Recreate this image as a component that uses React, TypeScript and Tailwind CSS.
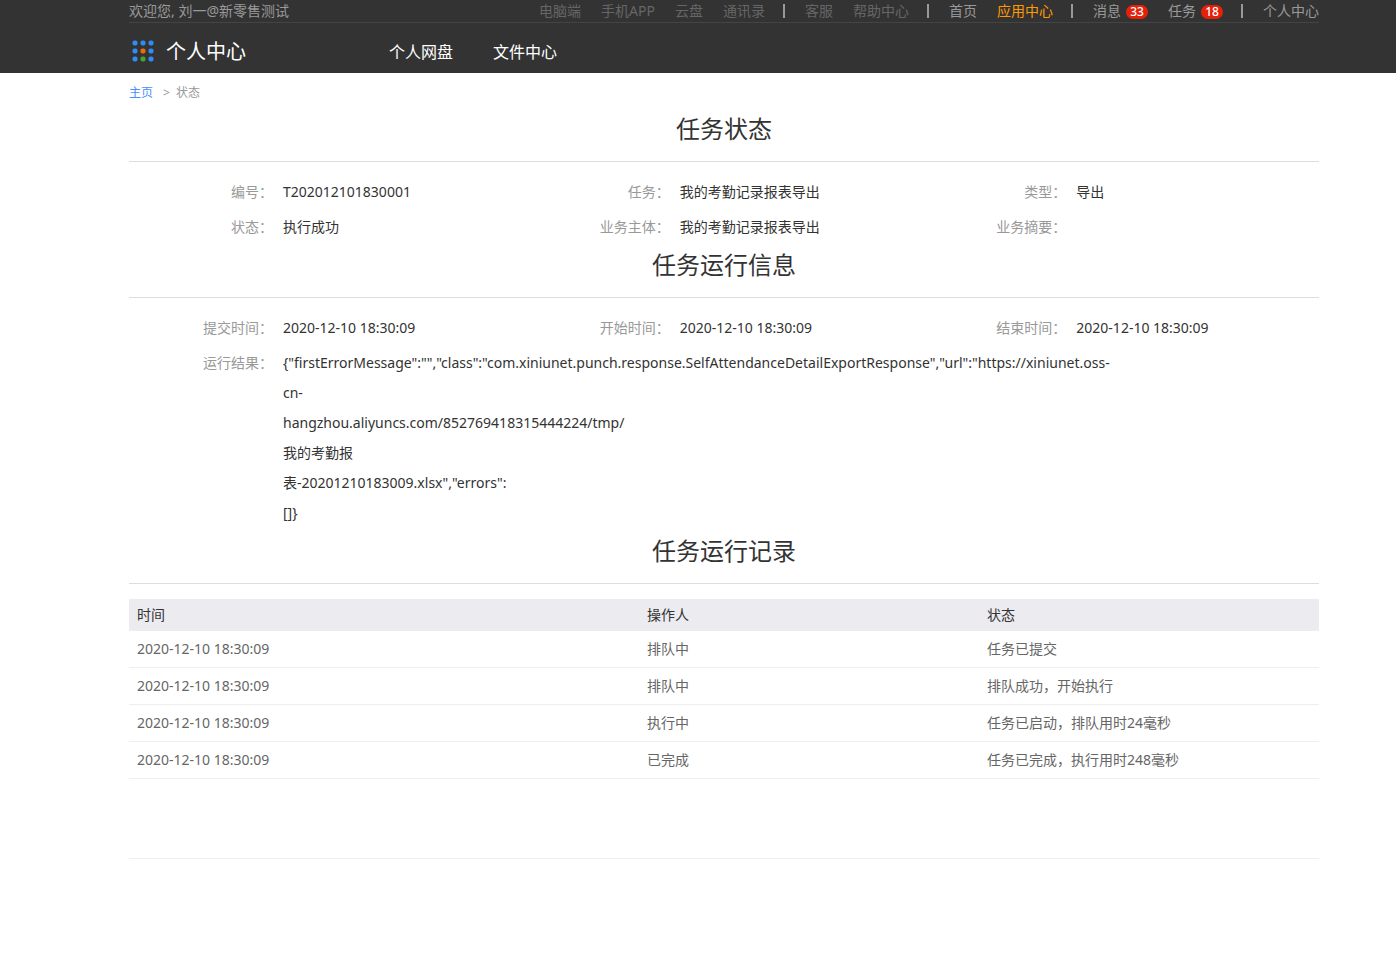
import * as React from 'react';

const deviceLinks = ['电脑端', '手机APP', '云盘', '通讯录'];
const supportLinks = ['客服', '帮助中心'];

const resultLines = [
  '{"firstErrorMessage":"","class":"com.xiniunet.punch.response.SelfAttendanceDetailExportResponse","url":"https://xiniunet.oss-',
  'cn-',
  'hangzhou.aliyuncs.com/852769418315444224/tmp/',
  '我的考勤报',
  '表-20201210183009.xlsx","errors":',
  '[]}',
];

const records = [
  { time: '2020-12-10 18:30:09', operator: '排队中', status: '任务已提交' },
  { time: '2020-12-10 18:30:09', operator: '排队中', status: '排队成功，开始执行' },
  { time: '2020-12-10 18:30:09', operator: '执行中', status: '任务已启动，排队用时24毫秒' },
  { time: '2020-12-10 18:30:09', operator: '已完成', status: '任务已完成，执行用时248毫秒' },
];

function Divider() {
  return <span aria-hidden="true" className="mr-5 ml-[18px] h-3.5 w-0.5 bg-[#999]" />;
}

function Badge({ children }: { children: React.ReactNode }) {
  return (
    <span className="mt-0.5 flex h-3.5 w-[22px] items-center justify-center rounded-full bg-[#e4220a] text-xs font-medium text-white">
      {children}
    </span>
  );
}

function Logo() {
  return (
    <svg width="24" height="24" viewBox="0 0 24 24" aria-hidden="true">
      {[3, 11, 19].map((y) =>
        [4, 12, 20].map((x) => {
          let fill = '#2f8cf5';
          if (x === 12 && y === 11) fill = '#ee6a0c';
          if (x === 12 && y === 19) fill = '#43a52b';
          return <rect key={`${x}-${y}`} x={x - 2.5} y={y - 2.5} width="5" height="5" rx="2" fill={fill} />;
        }),
      )}
    </svg>
  );
}

function Header() {
  return (
    <header className="bg-[#333] pr-[77px] pl-[129px]">
      <div className="flex h-[23px] items-center justify-between border-b border-[#444] text-sm leading-5 whitespace-nowrap text-[#999]">
        <span>欢迎您, 刘一@新零售测试</span>
        <nav className="flex items-center">
          <div className="flex gap-5 text-[#666]">
            {deviceLinks.map((text) => (
              <a key={text} href="#">{text}</a>
            ))}
          </div>
          <Divider />
          <div className="flex gap-5 text-[#666]">
            {supportLinks.map((text) => (
              <a key={text} href="#">{text}</a>
            ))}
          </div>
          <Divider />
          <div className="flex gap-5">
            <a href="#">首页</a>
            <a href="#" className="text-[#ff9900]">应用中心</a>
          </div>
          <Divider />
          <div className="flex gap-5">
            <a href="#" className="flex items-center gap-[5px]">
              消息<Badge>33</Badge>
            </a>
            <a href="#" className="flex items-center gap-[5px]">
              任务<Badge>18</Badge>
            </a>
          </div>
          <Divider />
          <a href="#">个人中心</a>
        </nav>
      </div>
      <div className="flex h-[50px] items-center pt-2 pl-0.5 text-white">
        <a href="#" className="flex w-[258px] items-center gap-[11px] text-xl">
          <Logo />
          个人中心
        </a>
        <nav className="flex gap-10 text-base">
          <a href="#">个人网盘</a>
          <a href="#">文件中心</a>
        </nav>
      </div>
    </header>
  );
}

function SectionTitle({ children }: { children: React.ReactNode }) {
  return (
    <h2 className="mb-[15px] border-b border-[#ddd] pb-3.5 text-center text-2xl leading-9 font-normal text-[#333]">
      {children}
    </h2>
  );
}

function Field({ label, wide, children }: { label: string; wide?: boolean; children?: React.ReactNode }) {
  return (
    <div className={wide ? 'col-span-3 mb-[5px] flex gap-2.5' : 'mb-[5px] flex gap-2.5'}>
      <dt className="w-36 shrink-0 text-right text-[#999]">{label}：</dt>
      <dd>{children}</dd>
    </div>
  );
}

export default function App() {
  return (
    <div
      lang="zh-CN"
      className="min-h-screen bg-white font-['Noto_Sans','Noto_Sans_CJK_SC',sans-serif] text-sm text-[#333]"
    >
      <Header />
      <main className="pr-[77px] pl-[129px]">
        <nav className="flex h-[38px] items-center pt-0.5 text-xs text-[#999]">
          <a href="#" className="text-[#4a8ff7]">主页</a>
          <span className="pr-1.5 pl-2.5">&gt;</span>
          <span>状态</span>
        </nav>

        <section>
          <SectionTitle>任务状态</SectionTitle>
          <dl className="grid grid-cols-3 leading-[30px]">
            <Field label="编号">T202012101830001</Field>
            <Field label="任务">我的考勤记录报表导出</Field>
            <Field label="类型">导出</Field>
            <Field label="状态">执行成功</Field>
            <Field label="业务主体">我的考勤记录报表导出</Field>
            <Field label="业务摘要" />
          </dl>
        </section>

        <section>
          <SectionTitle>任务运行信息</SectionTitle>
          <dl className="grid grid-cols-3 leading-[30px]">
            <Field label="提交时间">2020-12-10 18:30:09</Field>
            <Field label="开始时间">2020-12-10 18:30:09</Field>
            <Field label="结束时间">2020-12-10 18:30:09</Field>
            <Field label="运行结果" wide>
              {resultLines.map((line) => (
                <div key={line}>{line}</div>
              ))}
            </Field>
          </dl>
        </section>

        <section className="border-b border-[#eee] pb-[79px]">
          <SectionTitle>任务运行记录</SectionTitle>
          <table className="w-full table-fixed border-separate border-spacing-0 text-left">
            <thead className="bg-[#ebebf0]">
              <tr className="h-8">
                <th className="w-3/7 px-2 font-normal">时间</th>
                <th className="w-2/7 px-2 font-normal">操作人</th>
                <th className="w-2/7 px-2 font-normal">状态</th>
              </tr>
            </thead>
            <tbody className="text-[#666]">
              {records.map((record) => (
                <tr key={record.status} className="h-[37px]">
                  <td className="border-b border-[#eee] px-2">{record.time}</td>
                  <td className="border-b border-[#eee] px-2">{record.operator}</td>
                  <td className="border-b border-[#eee] px-2">{record.status}</td>
                </tr>
              ))}
            </tbody>
          </table>
        </section>
      </main>
    </div>
  );
}
